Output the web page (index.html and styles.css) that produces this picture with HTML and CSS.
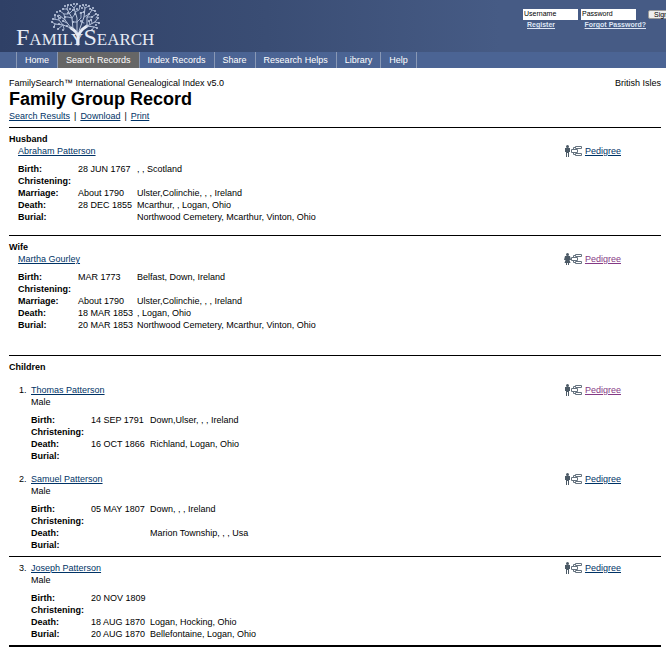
FILE: index.html
```html
<!DOCTYPE html>
<html lang="en">
<head>
    <meta charset="UTF-8">
    <meta name="viewport" content="width=device-width, initial-scale=1.0">
    <title>Family Group Record</title>
    <link rel="stylesheet" href="styles.css">
</head>
<body>
    <svg class="sprite" aria-hidden="true">
        <symbol id="man" viewBox="0 0 7 12">
            <circle cx="3.5" cy="1.5" r="1.5"/>
            <path d="M1 3h5v4H5v5H4V8H3v4H2V7H1z"/>
        </symbol>
        <symbol id="woman" viewBox="0 0 7 12">
            <circle cx="3.5" cy="1.5" r="1.5"/>
            <path d="M1 3h5l1 4H5.500l1 3H5v2H4v-2H3v2H2v-2H.5l1-3H0z"/>
        </symbol>
        <symbol id="chart" viewBox="0 0 11 12">
            <path d="M4.500 1.500h6v2h-6zM4.500 8.500h6v2h-6zM.5 4.500h6v3h-6zM2.500 4.500v-2h2M2.500 7.500v2h2" fill="#fff" stroke="#65727f"/>
        </symbol>
    </svg>

    <header class="header">
        <a class="logo" href="#" aria-label="FamilySearch">
            <svg width="150" height="48" viewBox="0 0 150 48">
                <g class="tree">
                    <path class="limb" d="M68 44V36Q67 32 61 28M68 37Q69 31 77 26"/>
                    <path class="branch" d="M61 28L53 25L45 24M61 28L55 20L49 15M63 29L62 18L57 9M67 33L67 18L64 8M69 31L74 17L75 8M77 26L77 17L82 10M77 26L85 22L88 18M77 26L84 27"/>
                    <path class="twig" d="M53 25L48 29M53 25L49 20L43 19M49 20L48 16M55 20L54 14L50 11M54 14L58 14M62 18L65 14M62 18L58 17L55 17M57 9L53 9M57 9L58 5M64 8L61 5M64 8L67 4M65 12L69 10L70 6M67 22L71 18L71 13M67 22L63 22M74 17L79 14M75 8L73 5M75 8L79 6M82 10L80 8M82 10L85 11M77 17L82 17L86 14M82 23L81 19M85 22L89 23M84 27L87 28M84 27L82 30M45 24L42 22M45 24L44 27M53 25L54 29M57 23L53 21M74 23L71 22M80 25L79 21M60 13L63 10M70 13L74 12M45 19L45 15M86 18L88 15"/>
                    <path class="leaf" d="M42 22h0M44 27h0M48 29h0M43 19h0M45 15h0M48 16h0M50 11h0M47 12h0M53 9h0M55 6h0M58 5h0M61 5h0M64 4h0M67 4h0M70 6h0M73 5h0M76 5h0M79 6h0M80 9h0M85 11h0M83 8h0M86 14h0M88 15h0M88 18h0M89 23h0M87 28h0M82 30h0M53 30h0M58 13h0M55 17h0M63 10h0M65 14h0M63 22h0M71 13h0M74 12h0M79 14h0M82 17h0M81 20h0M71 21h0M53 21h0M49 24h0M86 25h0M79 21h0M60 9h0M67 9h0M50 18h0M57 26h0M72 8h0"/>
                </g>
                <text x="6" y="45"><tspan class="cap">F</tspan>AMIL<tspan>Y</tspan><tspan class="cap">S</tspan>EARCH</text>
            </svg>
        </a>
        <form class="login">
            <div class="fields">
                <input type="text" value="Username" aria-label="Username">
                <input type="text" value="Password" aria-label="Password">
                <button type="button">Sign In</button>
            </div>
            <div class="login-links">
                <a href="#">Register</a>
                <a href="#">Forgot Password?</a>
            </div>
        </form>
    </header>

    <nav class="nav">
        <a href="#">Home</a>
        <a class="active" href="#">Search Records</a>
        <a href="#">Index Records</a>
        <a href="#">Share</a>
        <a href="#">Research Helps</a>
        <a href="#">Library</a>
        <a href="#">Help</a>
    </nav>

    <main class="content">
        <div class="source"><span>FamilySearch™ International Genealogical Index v5.0</span><span>British Isles</span></div>
        <h1>Family Group Record</h1>
        <div class="tools"><a href="#">Search Results</a><span>|</span><a href="#">Download</a><span>|</span><a href="#">Print</a></div>

        <section class="parent">
            <h2>Husband</h2>
            <div class="person">
                <a href="#">Abraham Patterson</a>
                <span class="pedigree"><svg class="figure"><use href="#man"/></svg><svg class="chart"><use href="#chart"/></svg><a href="#">Pedigree</a></span>
            </div>
            <table>
                <tr><th scope="row">Birth:</th><td class="date">28 JUN 1767</td><td>, , Scotland</td></tr>
                <tr><th scope="row">Christening:</th><td class="date"></td><td></td></tr>
                <tr><th scope="row">Marriage:</th><td class="date">About 1790</td><td>Ulster,Colinchie, , , Ireland</td></tr>
                <tr><th scope="row">Death:</th><td class="date">28 DEC 1855</td><td>Mcarthur, , Logan, Ohio</td></tr>
                <tr><th scope="row">Burial:</th><td class="date"></td><td>Northwood Cemetery, Mcarthur, Vinton, Ohio</td></tr>
            </table>
        </section>

        <section class="parent wife">
            <h2>Wife</h2>
            <div class="person">
                <a href="#">Martha Gourley</a>
                <span class="pedigree"><svg class="figure"><use href="#woman"/></svg><svg class="chart"><use href="#chart"/></svg><a class="visited" href="#">Pedigree</a></span>
            </div>
            <table>
                <tr><th scope="row">Birth:</th><td class="date">MAR 1773</td><td>Belfast, Down, Ireland</td></tr>
                <tr><th scope="row">Christening:</th><td class="date"></td><td></td></tr>
                <tr><th scope="row">Marriage:</th><td class="date">About 1790</td><td>Ulster,Colinchie, , , Ireland</td></tr>
                <tr><th scope="row">Death:</th><td class="date">18 MAR 1853</td><td>, Logan, Ohio</td></tr>
                <tr><th scope="row">Burial:</th><td class="date">20 MAR 1853</td><td>Northwood Cemetery, Mcarthur, Vinton, Ohio</td></tr>
            </table>
        </section>

        <section class="children">
            <h2>Children</h2>
            <div class="child">
                <div class="person">
                    <span class="number">1.</span><a href="#">Thomas Patterson</a>
                    <span class="pedigree"><svg class="figure"><use href="#man"/></svg><svg class="chart"><use href="#chart"/></svg><a class="visited" href="#">Pedigree</a></span>
                </div>
                <p>Male</p>
                <table>
                    <tr><th scope="row">Birth:</th><td class="date">14 SEP 1791</td><td>Down,Ulser, , , Ireland</td></tr>
                    <tr><th scope="row">Christening:</th><td class="date"></td><td></td></tr>
                    <tr><th scope="row">Death:</th><td class="date">16 OCT 1866</td><td>Richland, Logan, Ohio</td></tr>
                    <tr><th scope="row">Burial:</th><td class="date"></td><td></td></tr>
                </table>
            </div>
            <div class="child">
                <div class="person">
                    <span class="number">2.</span><a href="#">Samuel Patterson</a>
                    <span class="pedigree"><svg class="figure"><use href="#man"/></svg><svg class="chart"><use href="#chart"/></svg><a href="#">Pedigree</a></span>
                </div>
                <p>Male</p>
                <table>
                    <tr><th scope="row">Birth:</th><td class="date">05 MAY 1807</td><td>Down, , , Ireland</td></tr>
                    <tr><th scope="row">Christening:</th><td class="date"></td><td></td></tr>
                    <tr><th scope="row">Death:</th><td class="date"></td><td>Marion Township, , , Usa</td></tr>
                    <tr><th scope="row">Burial:</th><td class="date"></td><td></td></tr>
                </table>
            </div>
            <hr>
            <div class="child">
                <div class="person">
                    <span class="number">3.</span><a href="#">Joseph Patterson</a>
                    <span class="pedigree"><svg class="figure"><use href="#man"/></svg><svg class="chart"><use href="#chart"/></svg><a href="#">Pedigree</a></span>
                </div>
                <p>Male</p>
                <table>
                    <tr><th scope="row">Birth:</th><td class="date">20 NOV 1809</td><td></td></tr>
                    <tr><th scope="row">Christening:</th><td class="date"></td><td></td></tr>
                    <tr><th scope="row">Death:</th><td class="date">18 AUG 1870</td><td>Logan, Hocking, Ohio</td></tr>
                    <tr><th scope="row">Burial:</th><td class="date">20 AUG 1870</td><td>Bellefontaine, Logan, Ohio</td></tr>
                </table>
            </div>
        </section>
    </main>
</body>
</html>
```
FILE: styles.css
```css
* {
    box-sizing: border-box;
    margin: 0;
    padding: 0;
}

body {
    font-family: "Liberation Sans", Arial, sans-serif;
    font-size: 9px;
    line-height: 12px;
    color: #000;
    background: #fff;
}

a {
    color: #003366;
}

.sprite {
    display: none;
}

/* HEADER */
.header {
    display: flex;
    justify-content: space-between;
    height: 52px;
    overflow: hidden;
    background: linear-gradient(to right, #2f4066, #3a4d74 40%, #465b85 75%);
}

.logo {
    margin-left: 10px;
}

.logo svg {
    display: block;
}

.logo text {
    fill: #e6ebf5;
    font-family: "Liberation Serif", "Times New Roman", serif;
    font-size: 17px;
}

.logo .cap {
    font-size: 24px;
}

.tree {
    fill: none;
    stroke: #c0cce2;
    stroke-linecap: round;
}

.limb {
    stroke: #e6ebf5;
    stroke-width: 3;
}

.branch {
    stroke-width: 1;
}

.twig {
    stroke: #a9b7d2;
    stroke-width: 1;
}

.leaf {
    stroke-width: 2;
}

.login {
    flex: none;
    width: 143px;
    padding-top: 9px;
    overflow: hidden;
}

.fields {
    display: flex;
    gap: 3px;
}

.fields input {
    flex: none;
    width: 55px;
    height: 11px;
    padding: 0 1px 2px;
    border: 0;
    background: #fff;
    font-family: inherit;
    font-size: 7px;
}

.fields button {
    flex: none;
    height: 9px;
    margin: 1px 0 0 9px;
    padding: 0 5px;
    border: 1px solid #999;
    border-radius: 2px;
    background: #eee;
    font-family: inherit;
    font-size: 7px;
    line-height: 7px;
}

.login-links {
    display: flex;
    justify-content: space-between;
    padding: 0 20px 0 4px;
    font-size: 7px;
    font-weight: bold;
    line-height: 9px;
}

.login-links a {
    color: #dde5f3;
}

/* NAVIGATION */
.nav {
    display: flex;
    height: 16px;
    padding-left: 16px;
    background: #4b6494;
}

.nav a {
    padding: 0 8px;
    border-left: 1px solid #8998b5;
    color: #fff;
    font-size: 9px;
    line-height: 16px;
    text-decoration: none;
}

.nav a:last-child {
    border-right: 1px solid #8998b5;
}

.nav .active {
    background: #666;
}

/* RECORD */
.content {
    padding: 9px 5px 9px 9px;
}

.source {
    display: flex;
    justify-content: space-between;
}

h1 {
    font-size: 18px;
    line-height: 21px;
}

h2 {
    font-size: 9px;
    line-height: 12px;
}

.tools {
    display: flex;
    gap: 4px;
    margin-bottom: 5px;
}

.parent {
    height: 108px;
    padding: 6px 0 0 9px;
    border-top: 1px solid #000;
}

.wife {
    height: 120px;
}

.parent h2 {
    margin-left: -9px;
    line-height: 11px;
}

.person {
    display: flex;
}

.pedigree {
    display: flex;
    margin: 0 40px 0 auto;
}

.figure {
    width: 7px;
    height: 12px;
    fill: #4c5a66;
}

.chart {
    width: 11px;
    height: 12px;
    margin-right: 3px;
}

.pedigree .visited {
    color: #853a85;
}

table {
    margin-top: 6px;
    border-collapse: collapse;
    white-space: nowrap;
}

th {
    width: 60px;
    text-align: left;
}

th, td {
    height: 12px;
}

td.date {
    width: 59px;
}

.children {
    padding-top: 5px;
    border-top: 1px solid #000;
    border-bottom: 2px solid #000;
}

.children h2 {
    margin-bottom: 11px;
}

.child {
    height: 89px;
    padding-left: 22px;
}

.child:last-child {
    height: 83px;
}

.number {
    width: 12px;
    margin-left: -12px;
}

/* lies in the space under the second child */
hr {
    margin: -6px 0 5px;
    border: 0;
    border-top: 1px solid #000;
}
```
